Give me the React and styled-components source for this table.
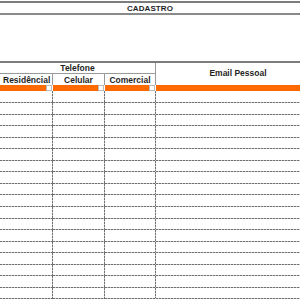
import React from "react";
import styled, { createGlobalStyle } from "styled-components";

const GlobalStyle = createGlobalStyle`
  html, body {
    margin: 0;
    padding: 0;
    background: #fff;
  }
  body {
    font-family: "Liberation Sans", Arial, sans-serif;
    color: #1f1f1f;
  }
`;

// the email column runs past the right edge of the view
const COLS = "53px 52px 51px 164px";
const ROW_H = 11.55;

// fine dashed grid like a spreadsheet's hairlines
const H_LINE = "repeating-linear-gradient(90deg, #707070 0 2px, #c4c4c4 2px 3px)";
const V_LINE = "repeating-linear-gradient(180deg, #707070 0 2px, #c4c4c4 2px 3px)";

const Sheet = styled.div`
  width: 300px;
  height: 300px;
  overflow: hidden;
  padding-top: 1px;
  box-sizing: border-box;
`;

const TitleBar = styled.div`
  height: 10px;
  border-top: 2px solid #7c7c7c;
  border-bottom: 2px solid #8a8a8a;
  display: flex;
  align-items: center;
  justify-content: center;
  font-size: 8px;
  font-weight: 700;
  letter-spacing: 0.1px;
`;

const Blank = styled.div`
  height: 46px;
`;

const Header = styled.div`
  display: grid;
  grid-template-columns: ${COLS};
  grid-template-rows: 11px 11px;
  border-top: 2px solid #7c7c7c;
`;

const GroupCell = styled.div`
  grid-column: 1 / 4;
  display: flex;
  align-items: center;
  justify-content: center;
  font-size: 8.5px;
  font-weight: 700;
  border-bottom: 1px solid #9a9a9a;
  border-right: 1px solid #9a9a9a;
`;

const SubCell = styled.div`
  display: flex;
  align-items: center;
  justify-content: ${({ $left }) => ($left ? "flex-start" : "center")};
  padding-left: ${({ $left }) => ($left ? "3px" : "0")};
  font-size: 8.5px;
  font-weight: 700;
  border-right: 1px solid #9a9a9a;
  white-space: nowrap;
`;

const EmailCell = styled.div`
  grid-column: 4;
  grid-row: 1 / 3;
  display: flex;
  align-items: center;
  justify-content: center;
  padding-bottom: 2px;
  font-size: 8.5px;
  font-weight: 700;
  white-space: nowrap;
`;

const FilterRow = styled.div`
  display: grid;
  grid-template-columns: ${COLS};
  height: 6px;
`;

const FilterCell = styled.div`
  background: #ff6a00;
  display: flex;
  justify-content: flex-end;
  border-right: ${({ $last }) => ($last ? "none" : "1px solid #fff")};
`;

const FilterButton = styled.span`
  width: 4px;
  height: 4px;
  background: #fff;
  border: 1px solid #b8b8b8;
`;

const Body = styled.div`
  display: flex;
  flex-direction: column;
`;

const Row = styled.div`
  display: grid;
  grid-template-columns: ${COLS};
  height: ${ROW_H}px;
  &:first-child {
    height: ${ROW_H + 0.5}px;
  }
`;

const Cell = styled.div`
  background:
    ${H_LINE} left bottom / 100% 1px no-repeat
    ${({ $last }) => ($last ? "" : `, ${V_LINE} right top / 1px 100% no-repeat`)};
`;

const phones = ["Residêncial", "Celular", "Comercial"];
const rows = Array.from({ length: 18 }, (_, i) => i);

export default function App() {
  return (
    <>
      <GlobalStyle />
      <Sheet>
        <TitleBar>CADASTRO</TitleBar>
        <Blank />
        <Header>
          <GroupCell>Telefone</GroupCell>
          <EmailCell>Email Pessoal</EmailCell>
          {phones.map((p, i) => (
            <SubCell key={p} $left={i === 0}>
              {p}
            </SubCell>
          ))}
        </Header>
        <FilterRow>
          {phones.map((p) => (
            <FilterCell key={p}>
              <FilterButton />
            </FilterCell>
          ))}
          <FilterCell $last />
        </FilterRow>
        <Body>
          {rows.map((r) => (
            <Row key={r}>
              <Cell />
              <Cell />
              <Cell />
              <Cell $last />
            </Row>
          ))}
        </Body>
      </Sheet>
    </>
  );
}
